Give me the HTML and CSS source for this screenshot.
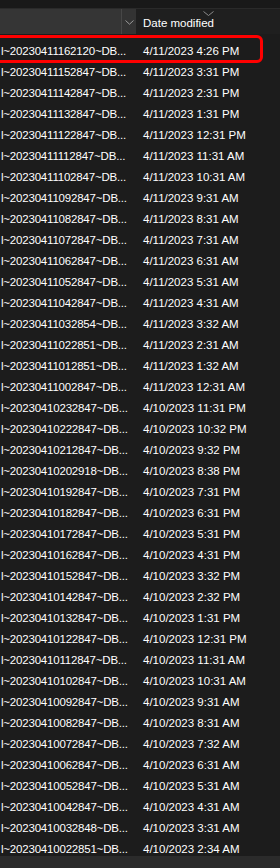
FILE: index.html
```html
<!DOCTYPE html>
<html>
<head>
<meta charset="utf-8">
<link rel="stylesheet" href="styles.css">
</head>
<body>
<div class="pane">
  <div class="topband"></div>
  <div class="header">
    <div class="h-name"></div>
    <div class="h-divider"></div>
    <div class="h-drop">
      <svg width="9" height="5" viewBox="0 0 9 5"><path d="M0.5 0.5 L4.5 4.2 L8.5 0.5" fill="none" stroke="#9a9a9a" stroke-width="1"/></svg>
    </div>
    <div class="h-date">Date modified</div>
    <svg class="sort" width="11" height="5" viewBox="0 0 11 5"><path d="M0.5 0.5 L5.5 4.5 L10.5 0.5" fill="none" stroke="#8a8a8a" stroke-width="1"/></svg>
  </div>
  <div class="list" id="list"></div>
  <div class="selbox"></div>
  <div class="hscroll"></div>
</div>
<script>
var rows = [
["20230411162120","4/11/2023 4:26 PM"],
["20230411152847","4/11/2023 3:31 PM"],
["20230411142847","4/11/2023 2:31 PM"],
["20230411132847","4/11/2023 1:31 PM"],
["20230411122847","4/11/2023 12:31 PM"],
["20230411112847","4/11/2023 11:31 AM"],
["20230411102847","4/11/2023 10:31 AM"],
["20230411092847","4/11/2023 9:31 AM"],
["20230411082847","4/11/2023 8:31 AM"],
["20230411072847","4/11/2023 7:31 AM"],
["20230411062847","4/11/2023 6:31 AM"],
["20230411052847","4/11/2023 5:31 AM"],
["20230411042847","4/11/2023 4:31 AM"],
["20230411032854","4/11/2023 3:32 AM"],
["20230411022851","4/11/2023 2:31 AM"],
["20230411012851","4/11/2023 1:32 AM"],
["20230411002847","4/11/2023 12:31 AM"],
["20230410232847","4/10/2023 11:31 PM"],
["20230410222847","4/10/2023 10:32 PM"],
["20230410212847","4/10/2023 9:32 PM"],
["20230410202918","4/10/2023 8:38 PM"],
["20230410192847","4/10/2023 7:31 PM"],
["20230410182847","4/10/2023 6:31 PM"],
["20230410172847","4/10/2023 5:31 PM"],
["20230410162847","4/10/2023 4:31 PM"],
["20230410152847","4/10/2023 3:32 PM"],
["20230410142847","4/10/2023 2:32 PM"],
["20230410132847","4/10/2023 1:31 PM"],
["20230410122847","4/10/2023 12:31 PM"],
["20230410112847","4/10/2023 11:31 AM"],
["20230410102847","4/10/2023 10:31 AM"],
["20230410092847","4/10/2023 9:31 AM"],
["20230410082847","4/10/2023 8:31 AM"],
["20230410072847","4/10/2023 7:32 AM"],
["20230410062847","4/10/2023 6:31 AM"],
["20230410052847","4/10/2023 5:31 AM"],
["20230410042847","4/10/2023 4:31 AM"],
["20230410032848","4/10/2023 3:31 AM"],
["20230410022851","4/10/2023 2:34 AM"]
];
var list = document.getElementById('list');
rows.forEach(function(r){
  var row = document.createElement('div');
  row.className = 'row';
  var n = document.createElement('div');
  n.className = 'c-name';
  n.textContent = 'l~' + r[0] + '~DB...';
  var d = document.createElement('div');
  d.className = 'c-date';
  d.textContent = r[1];
  row.appendChild(n);
  row.appendChild(d);
  list.appendChild(row);
});
</script>
</body>
</html>
```

FILE: styles.css
```css
html, body {
  margin: 0;
  padding: 0;
  background: #1c1c1c;
}
.pane {
  position: relative;
  width: 280px;
  height: 868px;
  overflow: hidden;
  background: #1c1c1c;
  font-family: "Liberation Sans", Arial, sans-serif;
  font-size: 11.5px;
  color: #ffffff;
}
.topband {
  height: 8px;
  background: #191919;
  border-bottom: 1px solid #2a2a2a;
}
.header {
  position: relative;
  display: flex;
  height: 25px;
  background: #1f1f1f;
}
.h-name {
  width: 121px;
  background: #353535;
}
.h-divider {
  width: 1px;
  background: #474747;
}
.h-drop {
  width: 14px;
  background: #333333;
  display: flex;
  align-items: center;
  justify-content: center;
  padding-top: 1px;
  box-sizing: border-box;
}
.h-drop svg {
  display: block;
}
.h-date {
  padding-left: 7px;
  display: flex;
  align-items: center;
  padding-top: 2px;
  color: #ffffff;
}
.sort {
  position: absolute;
  left: 203px;
  top: 2px;
}
.list {
  padding-top: 6px;
}
.row {
  display: flex;
  height: 21px;
  align-items: center;
}
.c-name {
  width: 143px;
  padding-left: 1px;
  box-sizing: border-box;
  white-space: nowrap;
  overflow: hidden;
  letter-spacing: -0.2px;
}
.c-date {
  white-space: nowrap;
}
.selbox {
  position: absolute;
  left: -12px;
  top: 35px;
  width: 275px;
  height: 28px;
  box-sizing: border-box;
  border: 3px solid #ff0000;
  border-radius: 6px;
}
.hscroll {
  position: absolute;
  left: 0;
  right: 0;
  bottom: 0;
  height: 12px;
  background: #2b2b2b;
}
```
